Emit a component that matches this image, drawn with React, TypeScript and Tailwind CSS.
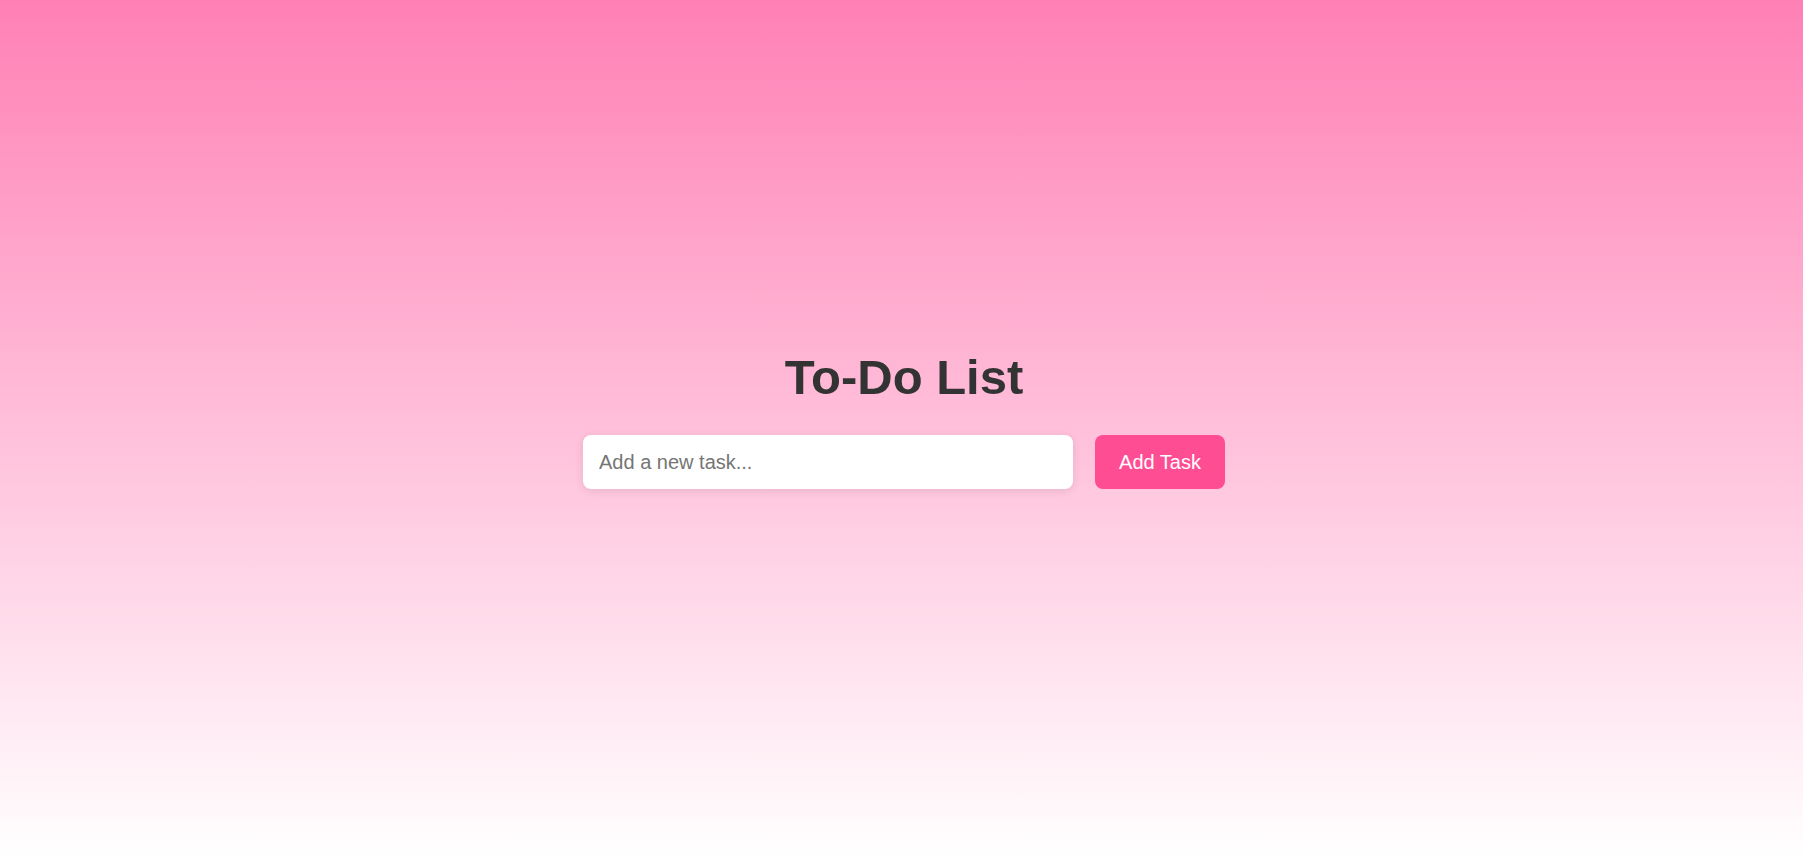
import { useState } from "react";
import type { FormEvent } from "react";

export default function App() {
  const [text, setText] = useState("");
  const [tasks, setTasks] = useState<string[]>([]);

  const addTask = (event: FormEvent) => {
    event.preventDefault();
    const value = text.trim();
    if (!value) return;
    setTasks([...tasks, value]);
    setText("");
  };

  return (
    <main className="flex min-h-screen flex-col items-center justify-center bg-linear-to-b/srgb from-[#ff80b5] to-white pr-5 pl-[25px] font-['Liberation_Sans',Arial,sans-serif]">
      <div className="w-full max-w-[642px] text-center">
        <h1 className="mb-[30px] text-[49px] leading-[55px] font-bold text-[#333333]">To-Do List</h1>
        <form onSubmit={addTask} className="mb-[20px] flex gap-[22px]">
          <input
            type="text"
            aria-label="New task"
            placeholder="Add a new task..."
            value={text}
            onChange={(event) => setText(event.target.value)}
            className="min-w-0 flex-1 rounded-lg bg-white px-4 py-[15px] text-[20px] leading-[24px] text-[#333333] shadow-[0_2px_10px_rgba(0,0,0,0.1)] outline-none placeholder:text-[#757575]"
          />
          <button
            type="submit"
            className="w-[130px] shrink-0 cursor-pointer rounded-lg bg-[#ff4d94] py-[15px] text-[20px] leading-[24px] text-white"
          >
            Add Task
          </button>
        </form>
        <ul>
          {tasks.map((task, index) => (
            <li key={index} className="mb-3 rounded-lg bg-white p-4 text-left text-[20px] text-[#333333]">
              {task}
            </li>
          ))}
        </ul>
      </div>
    </main>
  );
}
